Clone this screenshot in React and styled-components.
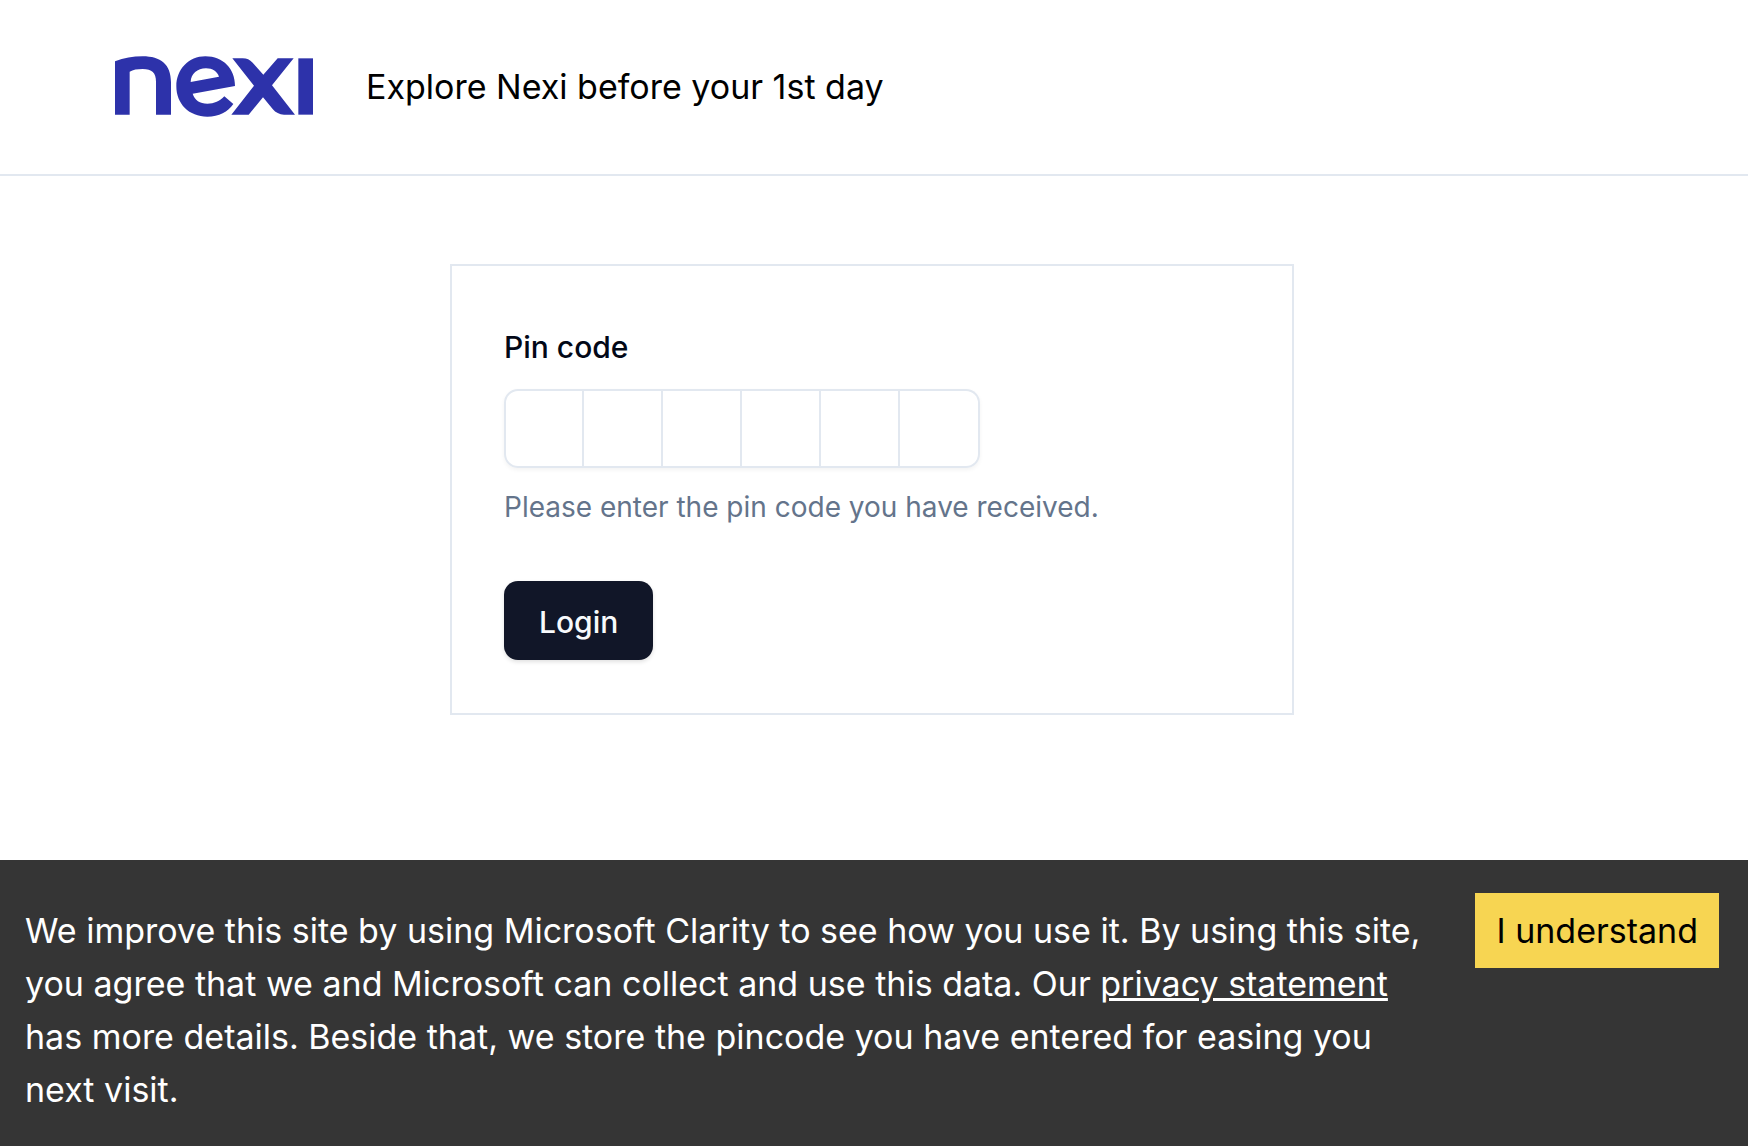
import React, { useRef, useState } from "react";
import styled, { createGlobalStyle } from "styled-components";

const GlobalStyle = createGlobalStyle`
  *, *::before, *::after { box-sizing: border-box; }
  body {
    margin: 0;
    background: #fff;
    color: #000;
    font-family: Inter, "Liberation Sans", sans-serif;
  }
`;

const Page = styled.div`
  display: flex;
  flex-direction: column;
  min-height: 100vh;
`;

const Header = styled.header`
  display: flex;
  align-items: center;
  gap: 53px;
  padding: 56px 114px 57px 115px;
  border-bottom: 2px solid #e2e8f0;
`;

const Logo = styled.svg`
  display: block;
  flex: none;
  width: 198px;
  height: 61px;
  fill: #2d32aa;
`;

const Title = styled.h1`
  margin: 0;
  font-size: 34px;
  line-height: 53px;
  font-weight: 400;
`;

const Main = styled.main`
  flex: 1;
  padding: 88px 4px 88px 0;
`;

const Card = styled.form`
  width: 100%;
  max-width: 844px;
  margin: 0 auto;
  padding: 61px 52px 53px;
  border: 2px solid #e2e8f0;
`;

const Label = styled.label`
  display: block;
  font-size: 30px;
  line-height: 40px;
  font-weight: 500;
  color: #020817;
`;

const PinGroup = styled.div`
  display: flex;
  width: max-content;
  margin: 22px 0 19px;
  border-radius: 14px;
  box-shadow: 0 2px 4px rgba(0, 0, 0, 0.05);
`;

const PinSlot = styled.input`
  width: 79px;
  height: 79px;
  margin: 0;
  padding: 0;
  border: 2px solid #e2e8f0;
  border-left-width: 0;
  background: #fff;
  font: inherit;
  font-size: 30px;
  text-align: center;
  color: #020817;

  &:first-child {
    width: 80px;
    border-left-width: 2px;
    border-radius: 14px 0 0 14px;
  }

  &:last-child {
    width: 80px;
    border-radius: 0 14px 14px 0;
  }
`;

const Hint = styled.p`
  margin: 0 0 54px;
  font-size: 28px;
  line-height: 40px;
  color: #64748b;
`;

const LoginButton = styled.button`
  display: block;
  height: 79px;
  padding: 2px 35px 0;
  border: 0;
  border-radius: 14px;
  background: #111628;
  color: #f8fafc;
  font: inherit;
  font-size: 30px;
  font-weight: 500;
  line-height: 40px;
  box-shadow: 0 2px 4px rgba(0, 0, 0, 0.12);
  cursor: pointer;
`;

const Banner = styled.aside`
  display: flex;
  align-items: flex-start;
  justify-content: space-between;
  gap: 53px;
  padding: 33px 29px 30px 25px;
  background: #353535;
  color: #fff;
  font-size: 34px;
  line-height: 53px;
`;

const BannerText = styled.p`
  flex: 1;
  max-width: 1400px;
  margin: 0;
  padding-top: 11px;
`;

const BannerLink = styled.a`
  color: inherit;
  text-decoration: underline;
  text-decoration-thickness: 3px;
`;

const AcceptButton = styled.button`
  flex: none;
  height: 75px;
  padding: 0 21px;
  border: 0;
  background: #f7d552;
  color: #000;
  font: inherit;
  cursor: pointer;
`;

const PIN_LENGTH = 6;

function NexiLogo() {
  return (
    <Logo viewBox="45 47 594 183" role="img" aria-label="Nexi">
      <path d="M45 63C72 53 98 48 128 48C182 48 213 72 213 126V223H168V124C168 98 156 86 128 86C112 86 99 88 89 94V223H45Z" />
      <path
        fillRule="evenodd"
        d="M405 137L278 160C284 179 300 190 322 190C343 190 359 183 373 168L400 191C384 215 357 229 322 229C267 229 229 191 229 138C229 87 266 48 316 48C370 48 405 86 405 137ZM272 125L357 109C352 94 338 84 318 84C292 84 273 100 272 125Z"
      />
      <path d="M397 54H428C441 54 449 58 458 67L490 103L533 54H581L516 135L585 223H552C538 222 527 217 518 206L489 171L446 223H394L462 136Z" />
      <path d="M595 54H639V223H595Z" />
    </Logo>
  );
}

function PinInput({ id }) {
  const [digits, setDigits] = useState(Array(PIN_LENGTH).fill(""));
  const slots = useRef([]);

  const change = (index, value) => {
    const digit = value.replace(/\D/g, "").slice(-1);
    setDigits(digits.map((d, i) => (i === index ? digit : d)));
    if (digit && index < PIN_LENGTH - 1) slots.current[index + 1].focus();
  };

  return (
    <PinGroup role="group" aria-label="Pin code">
      {digits.map((digit, i) => (
        <PinSlot
          key={i}
          id={i === 0 ? id : undefined}
          ref={(el) => {
            slots.current[i] = el;
          }}
          aria-label={`Digit ${i + 1}`}
          inputMode="numeric"
          autoComplete="off"
          value={digit}
          onChange={(e) => change(i, e.target.value)}
        />
      ))}
    </PinGroup>
  );
}

export default function App() {
  const [accepted, setAccepted] = useState(false);

  return (
    <>
      <GlobalStyle />
      <Page>
        <Header>
          <NexiLogo />
          <Title>Explore Nexi before your 1st day</Title>
        </Header>
        <Main>
          <Card onSubmit={(e) => e.preventDefault()}>
            <Label htmlFor="pin">Pin code</Label>
            <PinInput id="pin" />
            <Hint>Please enter the pin code you have received.</Hint>
            <LoginButton type="submit">Login</LoginButton>
          </Card>
        </Main>
        {!accepted && (
          <Banner>
            <BannerText>
              We improve this site by using Microsoft Clarity to see how you use it. By using this
              site, you agree that we and Microsoft can collect and use this data. Our{" "}
              <BannerLink href="#privacy">privacy statement</BannerLink> has more details. Beside
              that, we store the pincode you have entered for easing you next visit.
            </BannerText>
            <AcceptButton type="button" onClick={() => setAccepted(true)}>
              I understand
            </AcceptButton>
          </Banner>
        )}
      </Page>
    </>
  );
}
